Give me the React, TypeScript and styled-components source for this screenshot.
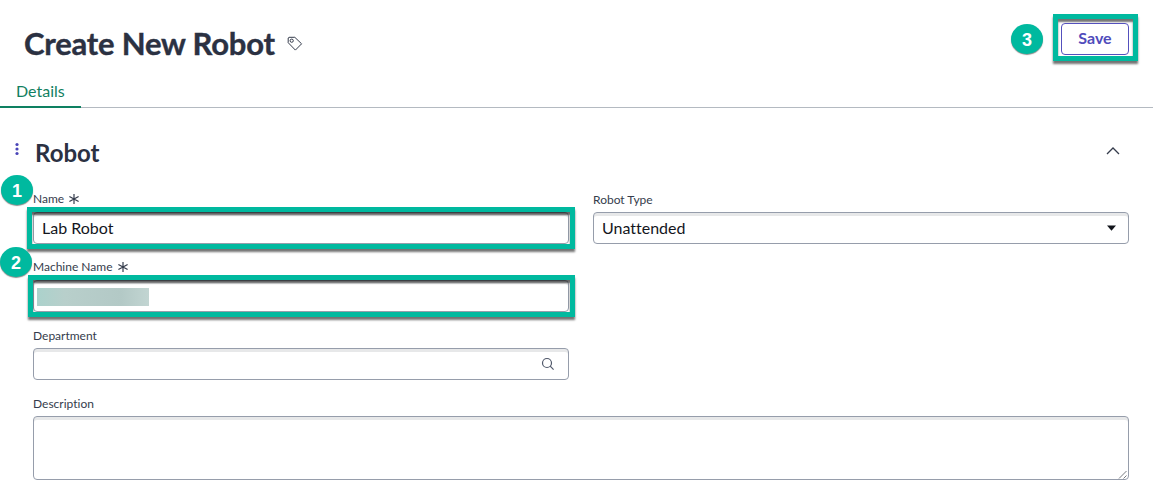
import React from "react";
import styled, { createGlobalStyle, css } from "styled-components";

const GlobalStyle = createGlobalStyle`
  *, *::before, *::after { box-sizing: border-box; }
  body {
    margin: 0;
    background: #fff;
    font-family: Lato, "Liberation Sans", sans-serif;
    font-variant-ligatures: none;
    color: #2b3142;
  }
`;

const Page = styled.main`
  width: 1153px;
  height: 490px;
  overflow: hidden;
  background: #fff;
`;

const Header = styled.header`
  display: flex;
  justify-content: space-between;
  height: 76px;
  padding: 14px 15px 0 24px;
`;

const TitleGroup = styled.div`
  display: flex;
  align-items: center;
  height: 60px;
`;

const Title = styled.h1`
  width: 263px;
  margin: 0;
  padding-bottom: 2px;
  font-size: 31px;
  line-height: 36px;
  font-weight: 700;
  letter-spacing: -0.2px;
  -webkit-text-stroke: 0.4px #2b3142;
  white-space: nowrap;
`;

const Actions = styled.div`
  display: flex;
  align-items: flex-start;
  gap: 10px;
`;

const SaveFrame = styled.div`
  width: 85px;
  height: 47px;
  padding: 4px 3px;
  border: 5px solid #00b99f;
  box-shadow: 0 3px 2px rgba(0, 0, 0, 0.55), inset 0 3px 2px rgba(0, 0, 0, 0.55);
`;

const SaveButton = styled.button`
  display: block;
  width: 68px;
  height: 32px;
  padding: 0 0 2px;
  border: 1px solid #5450bd;
  border-radius: 4px;
  background: #fff;
  color: #4f4bbb;
  font: 700 16px/28px Lato, sans-serif;
`;

const Badge = styled.span`
  display: flex;
  align-items: center;
  justify-content: center;
  width: 32px;
  height: 30px;
  padding-top: 2px;
  border-radius: 50%;
  background: #00b99f;
  box-shadow: 0 1px 1px rgba(0, 0, 0, 0.45);
  color: #fff;
  font: 700 18px/28px "Liberation Sans", sans-serif;
`;

const ActionBadge = styled(Badge)`
  margin-top: 10px;
`;

const FieldBadge = styled(Badge)<{ $left: number; $top: number }>`
  position: absolute;
  z-index: 2;
  left: ${(p) => p.$left}px;
  top: ${(p) => p.$top}px;
`;

const Tabs = styled.nav`
  display: flex;
  height: 32px;
  box-shadow: inset 0 -1px #b4bac1;
`;

const Tab = styled.a`
  width: 81px;
  height: 32px;
  padding-left: 16px;
  border-bottom: 2px solid #0e8061;
  color: #128061;
  font-size: 16px;
  line-height: 30px;
`;

const SectionHeader = styled.div`
  display: flex;
  align-items: center;
  height: 82px;
  padding: 8px 33px 0 15px;
`;

const SectionTitle = styled.h2`
  flex: 1;
  margin: 0 0 0 16px;
  font-size: 24px;
  line-height: 30px;
`;

const Form = styled.form`
  display: grid;
  grid-template-columns: 536px 536px;
  column-gap: 24px;
  row-gap: 14px;
  padding-left: 33px;
`;

const Field = styled.div<{ $column?: number; $wide?: boolean }>`
  position: relative;
  grid-column: ${(p) => (p.$wide ? "1 / 3" : p.$column ?? 1)};
`;

const Label = styled.label<{ $drop?: boolean }>`
  display: flex;
  align-items: center;
  gap: 4px;
  height: 22px;
  padding-bottom: ${(p) => (p.$drop ? 2 : 4)}px;
  color: #353c4c;
  font-size: 12px;
  line-height: 16px;
`;

const Control = styled.div<{ $height?: number; $pad?: number }>`
  display: flex;
  align-items: center;
  justify-content: space-between;
  height: ${(p) => p.$height ?? 32}px;
  padding: 0 12px 0 ${(p) => p.$pad ?? 8}px;
  border: 1px solid #969dab;
  border-radius: 4px;
  box-shadow: inset 0 3px #e7e8e9;
  background: #fff;
  color: #14161d;
  font-size: 16px;
  line-height: 30px;
`;

const Highlight = styled.div<{ $inset?: number }>`
  position: absolute;
  left: ${(p) => p.$inset ?? -6}px;
  right: -6px;
  top: 17px;
  height: 42px;
  border: 5px solid #00b99f;
  box-shadow: 0 3px 2px rgba(0, 0, 0, 0.55), inset 0 3px 2px rgba(0, 0, 0, 0.6);
  pointer-events: none;
`;

const Redacted = styled.span`
  width: 112px;
  height: 18px;
  margin-top: 2px;
  background: linear-gradient(90deg, #abd2cc 0%, #b8cfcb 25%, #b3c9c6 75%, #c2d5d2 100%);
`;

const TextArea = styled(Control)`
  align-items: flex-end;
  justify-content: flex-end;
  padding: 0;
`;

const Icon = styled.svg<{ $stroke?: string; $lift?: number }>`
  display: block;
  flex: none;
  margin-bottom: ${(p) => p.$lift ?? 0}px;
  fill: none;
  stroke: ${(p) => p.$stroke ?? "#353c4c"};
  ${(p) => p.$stroke === "none" && css`fill: #11141b;`}
`;

const MenuDots = styled(Icon)`
  fill: #4a45b8;
  stroke: none;
`;

const RequiredMark = () => (
  <Icon width="12" height="12" viewBox="0 0 12 12" strokeWidth="1.2">
    <path d="M6 1v10M1.4 3.4l9.2 5.2M10.6 3.4L1.4 8.6" />
  </Icon>
);

export default function App() {
  return (
    <Page>
      <GlobalStyle />
      <Header>
        <TitleGroup>
          <Title>Create New Robot</Title>
          <Icon width="16" height="16" viewBox="0 0 16 16" strokeWidth="1" strokeLinejoin="round">
            <path d="M1.2 2v4.7l7.2 7.4 6.2-6.3L7.8 1.3H2z" />
            <circle cx="4.7" cy="4.7" r="1.6" />
          </Icon>
        </TitleGroup>
        <Actions>
          <ActionBadge>3</ActionBadge>
          <SaveFrame>
            <SaveButton type="button">Save</SaveButton>
          </SaveFrame>
        </Actions>
      </Header>
      <Tabs>
        <Tab>Details</Tab>
      </Tabs>
      <SectionHeader>
        <MenuDots width="4" height="14" viewBox="0 0 4 14" $lift={8}>
          <circle cx="2" cy="2.5" r="1.6" />
          <circle cx="2" cy="7" r="1.6" />
          <circle cx="2" cy="11.5" r="1.6" />
        </MenuDots>
        <SectionTitle>Robot</SectionTitle>
        <Icon width="14" height="10" viewBox="0 0 14 10" strokeWidth="1.3" $lift={4}>
          <path d="M1 8l6-6 6 6" />
        </Icon>
      </SectionHeader>
      <Form>
        <Field>
          <FieldBadge $left={-32} $top={-15}>1</FieldBadge>
          <Label>Name <RequiredMark /></Label>
          <Control>Lab Robot</Control>
          <Highlight />
        </Field>
        <Field $column={2}>
          <Label $drop>Robot Type</Label>
          <Control>
            Unattended
            <Icon width="9" height="6" viewBox="0 0 9 6" $stroke="none">
              <path d="M0 .5h9L4.5 5.7z" />
            </Icon>
          </Control>
        </Field>
        <Field>
          <FieldBadge $left={-33} $top={-11}>2</FieldBadge>
          <Label>Machine Name <RequiredMark /></Label>
          <Control $pad={3}><Redacted /></Control>
          <Highlight $inset={-5} />
        </Field>
        <Field>
          <Label $drop>Department</Label>
          <Control>
            <span />
            <Icon width="16" height="16" viewBox="0 0 16 16" strokeWidth="1.2" $stroke="#50586a">
              <circle cx="7" cy="7" r="4.5" />
              <path d="M10.2 10.2l3.4 3.4" />
            </Icon>
          </Control>
        </Field>
        <Field $wide>
          <Label $drop>Description</Label>
          <TextArea $height={64}>
            <Icon width="10" height="9" viewBox="0 0 10 9" $stroke="#777a80">
              <path d="M1 8.5l7.5-7.5M5.5 8.5L8.5 5.5" />
            </Icon>
          </TextArea>
        </Field>
      </Form>
    </Page>
  );
}
